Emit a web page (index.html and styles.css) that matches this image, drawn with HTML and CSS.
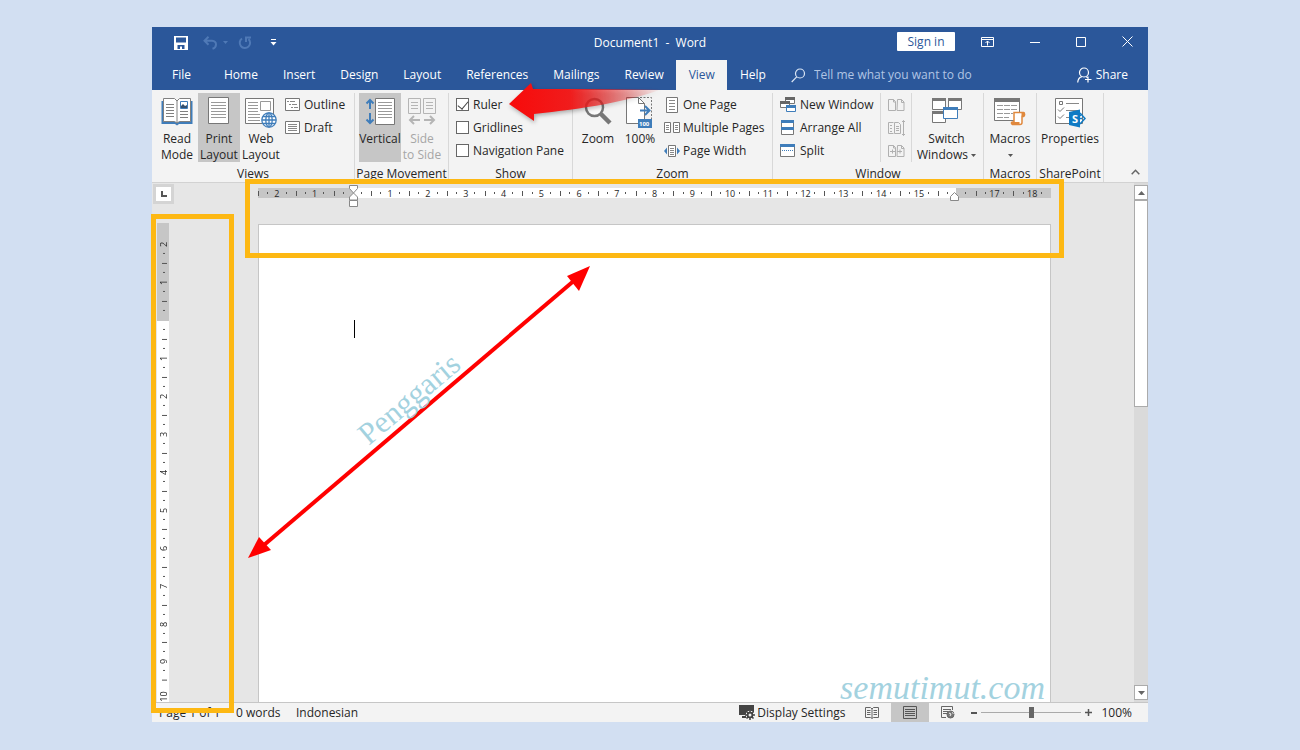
FILE: index.html
```html
<!DOCTYPE html>
<html lang="en">

<head>
  <meta charset="UTF-8" />
  <title>Document1 - Word</title>
  <link rel="stylesheet" href="styles.css">
</head>

<body>
  <div class="window">
    <!-- title bar -->
    <header class="titlebar">
      <div class="quick">
        <button aria-label="Save"><svg width="14" height="14" viewBox="0 0 14 14"><path d="M0 0h14v14H0z" fill="#fff"/><path d="M2 1.500h10v5H2zM3.500 9h7v4H8V10.500H6V13H3.500z" fill="#2b579a"/></svg></button>
        <button class="undo" aria-label="Undo"><svg width="15" height="14" viewBox="0 0 15 14" fill="none" stroke="#4f79b6" stroke-width="2"><path d="M5.500 0.800L1.500 4.800l4 4M2 4.800h7c5.500 0.500 5 6.500 0.500 8"/></svg><svg width="5" height="3" viewBox="0 0 5 3"><path d="M0 0h5L2.500 3z" fill="#4f79b6"/></svg></button>
        <button class="redo" aria-label="Repeat"><svg width="14" height="14" viewBox="0 0 14 14" fill="none" stroke="#4f79b6" stroke-width="2"><path d="M4 2.500A5.200 5.200 0 1 0 10.500 3M8 6V1.500h5"/></svg></button>
        <button aria-label="Customize"><svg width="7" height="7" viewBox="0 0 7 7"><path d="M1 0h5v1H1zM0.500 3h6L3.500 6.500z" fill="#fff"/></svg></button>
      </div>
      <div class="title">Document1&nbsp; -&nbsp; Word</div>
      <div class="controls">
        <button class="signin">Sign in</button>
        <button aria-label="Ribbon options"><svg width="13" height="10" viewBox="0 0 13 10" fill="none" stroke="#fff"><path d="M0.500 0.500h12v9H0.500zM0.500 2.500h12M6.500 8.500V4M4.500 6l2-2 2 2"/></svg></button>
        <button aria-label="Minimize"><svg width="10" height="10" viewBox="0 0 10 10" stroke="#fff"><path d="M0 5.500h10"/></svg></button>
        <button aria-label="Maximize"><svg width="10" height="10" viewBox="0 0 10 10" fill="none" stroke="#fff"><path d="M0.500 0.500h9v9h-9z"/></svg></button>
        <button aria-label="Close"><svg width="11" height="11" viewBox="0 0 11 11" stroke="#fff"><path d="M0.500 0.500l10 10M10.500 0.500l-10 10"/></svg></button>
      </div>
    </header>

    <!-- tabs -->
    <nav class="tabs">
      <a class="file" href="#">File</a>
      <a href="#">Home</a>
      <a href="#">Insert</a>
      <a href="#">Design</a>
      <a href="#">Layout</a>
      <a href="#">References</a>
      <a href="#">Mailings</a>
      <a href="#">Review</a>
      <a class="active" href="#">View</a>
      <a href="#">Help</a>
      <label class="tell">
        <svg width="15" height="15" viewBox="0 0 15 15" fill="none" stroke="#dbe6f5" stroke-width="1.200"><circle cx="9" cy="5.500" r="4.500"/><path d="M5.700 8.800L0.700 14"/></svg>
        <input type="text" placeholder="Tell me what you want to do">
      </label>
      <button class="share"><svg width="15" height="16" viewBox="0 0 15 16" fill="none" stroke="#fff" stroke-width="1.200"><circle cx="7" cy="5.500" r="4.500"/><path d="M0.700 15.500c0.300-3.500 2-5.300 4.300-5.800M9 9.700l1.500 0.800M11 9.500v6M8 12.500h6.500"/></svg>Share</button>
    </nav>

    <!-- ribbon -->
    <section class="ribbon">
      <div class="group views">
        <div class="tools">
          <button class="big"><svg width="32" height="30" viewBox="0 0 32 30"><path d="M0.500 4h31v23H18l-2 1.500L14 27H0.500z" fill="#3f7dba"/><path d="M2.500 1.500h11L16 4l2.500-2.500h11v23h-11L16 26l-2.500-1.500h-11z" fill="#fff" stroke="#808080"/><path d="M16 4v22M5 7.500h8M5 10.500h8M5 13.500h8M5 16.500h8M5 19.500h8M19 14.500h8M19 17.500h8M19 20.500h8" stroke="#808080"/><path d="M19.500 4.500h7v7h-7z" fill="#fff" stroke="#3f7dba"/><path d="M20 11V9l2-2 2 2 2-1v3z" fill="#35506e"/></svg><span>Read<br>Mode</span></button>
          <button class="big on"><svg width="22" height="28" viewBox="0 0 22 28"><path d="M0.500 0.500h20v26h-20z" fill="#fff" stroke="#777"/><path d="M3 5.500h15M3 8.500h15M3 11.500h15M3 14.500h15M3 17.500h15M3 20.500h15" stroke="#999"/></svg><span>Print<br>Layout</span></button>
          <button class="big"><svg width="32" height="32" viewBox="0 0 32 32"><path d="M0.500 1.500h28v25h-28z" fill="#fff" stroke="#777"/><path d="M15.500 4.500h10v9h-10z" fill="#fff" stroke="#999"/><path d="M3 5.500h10M3 8.500h10M3 11.500h10M3 14.500h10M3 17.500h12M3 20.500h12M3 23.500h12" stroke="#999"/><g fill="#fff" stroke="#3f7dba" stroke-width="1.300"><circle cx="24" cy="23" r="7.200"/><ellipse cx="24" cy="23" rx="3.200" ry="7.200"/><path d="M24 16v14M17 23h14M18 19.500h12M18 26.500h12"/></g></svg><span>Web<br>Layout</span></button>
          <div class="small">
            <button><svg width="15" height="13" viewBox="0 0 15 13"><path d="M0.500 0.500h14v12h-14z" fill="#fff" stroke="#777"/><path d="M2 3.500h2M5 3.500h5M4 6.500h2M7 6.500h5M6 9.500h2M9 9.500h4" stroke="#888"/></svg>Outline</button>
            <button><svg width="15" height="13" viewBox="0 0 15 13"><path d="M0.500 0.500h14v12h-14z" fill="#fff" stroke="#777"/><path d="M3 3.500h9M3 5.500h9M3 7.500h9M3 9.500h9" stroke="#888"/></svg>Draft</button>
          </div>
        </div>
        <h2>Views</h2>
      </div>

      <div class="group movement">
        <div class="tools">
          <button class="big on"><svg width="30" height="30" viewBox="0 0 30 30"><path d="M10.500 1.500h19v26h-19z" fill="#fff" stroke="#777"/><path d="M13 5.500h14M13 8.500h14M13 11.500h14M13 14.500h14M13 17.500h14M13 20.500h14" stroke="#999"/><path d="M5 3v9M1.500 6.500L5 3l3.500 3.500M5 16v10M1.500 22.500L5 26l3.500-3.500" fill="none" stroke="#3f7dba" stroke-width="2"/></svg><span>Vertical</span></button>
          <button class="big" disabled><svg width="28" height="28" viewBox="0 0 28 28" fill="none" stroke="#b5b5b5"><path d="M0.500 1.500h12v15h-12zM15.500 1.500h12v15h-12zM3 5.500h7M3 8.500h7M3 11.500h7M18 5.500h7M18 8.500h7M18 11.500h7"/><path d="M12 23H3M6 19l-4 4 4 4M16 23h9M22 19l4 4-4 4" stroke-width="2"/></svg><span>Side<br>to Side</span></button>
        </div>
        <h2>Page Movement</h2>
      </div>

      <div class="group show">
        <div class="tools">
          <div class="checks">
            <label><input type="checkbox" checked>Ruler</label>
            <label><input type="checkbox">Gridlines</label>
            <label><input type="checkbox">Navigation Pane</label>
          </div>
        </div>
        <h2>Show</h2>
      </div>

      <div class="group zoom">
        <div class="tools">
          <button class="big"><svg width="28" height="30" viewBox="0 0 28 30" fill="none" stroke="#777"><circle cx="10.500" cy="10.500" r="8.500" fill="#fafafa" stroke-width="2.500"/><path d="M17 17l9 9" stroke-width="4.500"/></svg><span>Zoom</span></button>
          <button class="big"><svg width="28" height="32" viewBox="0 0 28 32"><path d="M14 0.500h11.500V31" fill="none" stroke="#777" stroke-dasharray="2 1.500"/><path d="M0.500 0.500h12l6 6v20h-18z" fill="#fff" stroke="#777"/><path d="M12.500 0.500v6h6" fill="none" stroke="#777"/><path d="M14 13.500h9M19 9l4.500 4.500L19 18" fill="none" stroke="#3f7dba" stroke-width="2"/><path d="M12 22h14v9H12z" fill="#3f7dba"/><text x="13" y="29" font-size="6" font-weight="bold" fill="#fff">100</text></svg><span>100%</span></button>
          <div class="small">
            <button><svg width="16" height="16" viewBox="0 0 16 16"><path d="M2.500 0.500h11v15h-11z" fill="#fff" stroke="#777"/><path d="M5 3.500h6M5 6.500h6M5 9.500h6M5 12.500h6" stroke="#888"/></svg>One Page</button>
            <button><svg width="16" height="12" viewBox="0 0 16 12"><path d="M0.500 0.500h6v10h-6zM9.500 0.500h6v10h-6z" fill="#fff" stroke="#777"/><path d="M2 3.500h3M2 5.500h3M2 7.500h3M11 3.500h3M11 5.500h3M11 7.500h3" stroke="#888"/></svg>Multiple Pages</button>
            <button><svg width="16" height="12" viewBox="0 0 16 12"><path d="M4.500 0.500h7v11h-7z" fill="#fff" stroke="#777"/><path d="M6 3.500h4M6 5.500h4M6 7.500h4M6 9.500h4" stroke="#888"/><path d="M3 2.500v7L0 6zM13 2.500v7L16 6z" fill="#3f7dba"/></svg>Page Width</button>
          </div>
        </div>
        <h2>Zoom</h2>
      </div>

      <div class="group wins">
        <div class="tools">
          <div class="small">
            <button><svg width="16" height="15" viewBox="0 0 16 15"><path d="M5.500 0.500h9v6h-9zM0.500 4.500h9v6h-9z" fill="#fff" stroke="#777"/><path d="M5 0h10v3H5zM0 4h10v3H0z" fill="#666"/><path d="M6.500 8.500h9v6h-9z" fill="#fff" stroke="#3f7dba"/><path d="M6 8h10v3H6z" fill="#3f7dba"/></svg>New Window</button>
            <button><svg width="16" height="15" viewBox="0 0 16 15"><path d="M1.500 0.500h12v14h-12z" fill="#fff" stroke="#777"/><path d="M1 0h13v3H1zM1 7h13v3H1z" fill="#3f7dba"/></svg>Arrange All</button>
            <button><svg width="16" height="13" viewBox="0 0 16 13"><path d="M0.500 0.500h14v12h-14z" fill="#fff" stroke="#777"/><path d="M0 0h15v3H0z" fill="#3f7dba"/><path d="M2 6.500h11" stroke="#3f7dba" stroke-dasharray="1 1"/></svg>Split</button>
          </div>
          <div class="small pair">
            <button disabled aria-label="View Side by Side"><svg width="17" height="12" viewBox="0 0 17 12" fill="none" stroke="#b0b0b0"><path d="M0.500 0.500h5l2 2v9h-7zM5.500 0.500v2.500h2M9.500 0.500h4l2.500 2.500v8.500H9zM13.500 0.500v3H16"/></svg></button>
            <button disabled aria-label="Synchronous Scrolling"><svg width="17" height="16" viewBox="0 0 17 16" fill="none" stroke="#b0b0b0"><path d="M5.500 2.500H0.500v11h5M6.500 2.500h4l2 2v9h-6zM2 5.500h2M2 8.500h2M2 11.500h2M8 6.500h3M8 8.500h3M8 10.500h3M15.500 0.500v15M14 2l1.500-1.500L17 2M14 14l1.500 1.500L17 14"/></svg></button>
            <button disabled aria-label="Reset Window Position"><svg width="17" height="12" viewBox="0 0 17 12" fill="none" stroke="#b0b0b0"><path d="M0.500 0.500h5l2 2v9h-7zM5.500 0.500v2.500h2M9.500 0.500h4l2.500 2.500v8.500H9zM13.500 0.500v3H16M2 6.500h5M9 6.500h5M4.500 4.500v4M12 4.500v4"/></svg></button>
          </div>
          <button class="big switch"><svg width="30" height="28" viewBox="0 0 30 28"><path d="M0.500 1.500h13v11h-13zM16.500 1.500h13v11h-13zM0.500 14.500h13v11h-13z" fill="#fff" stroke="#777"/><path d="M0 1h14v3H0zM16 1h14v3H16zM0 14h14v3H0z" fill="#777"/><path d="M11.500 10.500h14v11h-14z" fill="#fff" stroke="#3f7dba"/><path d="M11 10h15v3H11z" fill="#3f7dba"/></svg><span>Switch<br>Windows <svg width="5" height="3" viewBox="0 0 5 3"><path d="M0 0h5L2.500 3z" fill="#555"/></svg></span></button>
        </div>
        <h2>Window</h2>
      </div>

      <div class="group macros">
        <div class="tools">
          <button class="big"><svg width="32" height="30" viewBox="0 0 32 30"><path d="M0.500 1.500h25v22h-25z" fill="#fff" stroke="#777"/><path d="M0 1h26v4H0z" fill="#777"/><path d="M3 8.500h20M3 12.500h20M3 16.500h16M3 20.500h12" stroke="#999" stroke-dasharray="6 1"/><path d="M20 15.500h9.500c1.500 0.500 1.500 3.500 0 4H28v6c0 1.500-1 2-2 2h-7.500c-1.500-0.500-1.500-2.500 0-2.500H20z" fill="#fff" stroke="#e0883d" stroke-width="1.500"/><path d="M17.500 25h8v3h-7zM27.500 15h3v4h-3z" fill="#e0883d"/></svg><span>Macros<br><svg width="5" height="3" viewBox="0 0 5 3"><path d="M0 0h5L2.500 3z" fill="#555"/></svg></span></button>
        </div>
        <h2>Macros</h2>
      </div>

      <div class="group share-point">
        <div class="tools">
          <button class="big"><svg width="32" height="31" viewBox="0 0 32 31"><path d="M1.500 1.500h27v25h-27z" fill="#fff" stroke="#777"/><path d="M12 6.500h13M12 13.500h13M12 20.500h4" stroke="#888"/><path d="M5.500 4.500h3v3h-3zM4 12.500l2 2 4-4M4 19.500l2 2 4-4" fill="none" stroke="#777"/><path d="M15 15l11-2.500v18L15 28z" fill="#0f7ac4"/><path d="M26 16l5 5.500-5 5.500M27 18.500h-1M28 21.500h-2" fill="none" stroke="#0f7ac4" stroke-width="1.500"/><text x="18" y="26" font-size="11" font-weight="bold" fill="#fff">S</text></svg><span>Properties</span></button>
        </div>
        <h2>SharePoint</h2>
      </div>
      <button class="collapse" aria-label="Collapse the ribbon"><svg width="9" height="6" viewBox="0 0 9 6"><path d="M0.700 5.300l3.800-4 3.800 4" fill="none" stroke="#666" stroke-width="1.500"/></svg></button>
    </section>

    <!-- document area -->
    <main class="work">
      <div class="side">
        <button class="tabstop" aria-label="Left tab"><svg width="6" height="6" viewBox="0 0 6 6"><path d="M1 0v5h5" fill="none" stroke="#555" stroke-width="2"/></svg></button>
        <ol class="vruler">
          <li class="first">2</li><li>1</li><li></li><li>1</li><li>2</li><li>3</li><li>4</li><li>5</li><li>6</li><li>7</li><li>8</li><li>9</li><li class="last">10</li>
        </ol>
      </div>
      <div class="center">
        <div class="hruler">
          <ol>
            <li>2</li><li>1</li><li></li><li>1</li><li>2</li><li>3</li><li>4</li><li>5</li><li>6</li><li>7</li><li>8</li><li>9</li><li>10</li><li>11</li><li>12</li><li>13</li><li>14</li><li>15</li><li></li><li>17</li><li>18</li>
          </ol>
          <svg class="indent left" width="9" height="22" viewBox="0 0 9 22" fill="#fff" stroke="#888"><path d="M0.500 0.500h8v3l-4 4.500-4-4.500zM4.500 8l4 4v3h-8v-3zM0.500 15.500h8v6h-8z"/></svg>
          <svg class="indent right" width="9" height="9" viewBox="0 0 9 9" fill="#fff" stroke="#888"><path d="M4.500 0.500l4 4v4h-8v-4z"/></svg>
        </div>
        <article class="sheet">
          <span class="caret"></span>
          <p class="brand">semutimut.com</p>
        </article>
      </div>
      <div class="scroll">
        <button aria-label="Scroll up"><svg width="7" height="4" viewBox="0 0 7 4"><path d="M0 4h7L3.500 0z" fill="#666"/></svg></button>
        <div class="thumb"></div>
        <button class="down" aria-label="Scroll down"><svg width="7" height="4" viewBox="0 0 7 4"><path d="M0 0h7L3.500 4z" fill="#666"/></svg></button>
      </div>
    </main>

    <!-- status bar -->
    <footer class="status">
      <span class="pages">Page 1 of 1</span>
      <span class="words">0 words</span>
      <span>Indonesian</span>
      <button class="display"><svg width="16" height="15" viewBox="0 0 16 15"><path d="M0 0h15v10H0zM3 11h5v2H3z" fill="#444"/><circle cx="11" cy="10" r="4" fill="#444" stroke="#f3f3f3"/><path d="M11 5v10M6 10h10M7.500 6.500l7 7M14.500 6.500l-7 7" stroke="#444" stroke-width="1.500"/><circle cx="11" cy="10" r="1.500" fill="#f3f3f3"/></svg>Display Settings</button>
      <button class="mode" aria-label="Read Mode"><svg width="14" height="13" viewBox="0 0 14 13" fill="none" stroke="#666"><path d="M0.500 1.500h5L7 3l1.500-1.500h5v10h-5L7 12.500 5.500 11.500h-5zM7 3v9M2 4.500h3.500M2 6.500h3.500M2 8.500h3.500M8.500 4.500H12M8.500 6.500H12M8.500 8.500H12"/></svg></button>
      <button class="mode on" aria-label="Print Layout"><svg width="14" height="13" viewBox="0 0 14 13" fill="none" stroke="#555"><path d="M0.500 0.500h13v12h-13zM2 3.500h10M2 5.500h10M2 7.500h10M2 9.500h10"/></svg></button>
      <button class="mode" aria-label="Web Layout"><svg width="14" height="13" viewBox="0 0 14 13" fill="none" stroke="#666"><path d="M5 11.500H0.500v-11h11V4M2 3.500h8M2 5.500h5M2 7.500h4"/><circle cx="9.500" cy="8.500" r="3.500" fill="#777"/><path d="M8 7l2 1-1 2M11 6.500l1.500 1" stroke="#f3f3f3"/></svg></button>
      <div class="zoombar">
        <button aria-label="Zoom out"><svg width="6" height="6" viewBox="0 0 6 6"><path d="M0 2h6v2H0z" fill="#555"/></svg></button>
        <input type="range" min="0" max="100" value="50" aria-label="Zoom level">
        <button aria-label="Zoom in"><svg width="7" height="7" viewBox="0 0 7 7"><path d="M0 3.500h7M3.500 0v7" stroke="#555" stroke-width="1.500"/></svg></button>
        <span>100%</span>
      </div>
    </footer>

    <!-- highlights and arrows over the window -->
    <div class="mark mark-top"></div>
    <div class="mark mark-left"></div>
    <svg class="arrows">
      <defs>
        <linearGradient id="fade" gradientUnits="userSpaceOnUse" x1="357" y1="0" x2="510" y2="0">
          <stop offset="0" stop-color="#f80a0a"/>
          <stop offset="0.400" stop-color="#f01c1c"/>
          <stop offset="1" stop-color="#f01c1c" stop-opacity="0"/>
        </linearGradient>
      </defs>
      <path class="pointer" d="M357 77L379 56L381 62L510 62C480 74 430 82 382 87L382 94Z" fill="url(#fade)"/>
      <g fill="#f00">
        <path d="M112 518L424 252" stroke="#f00" stroke-width="4"/>
        <path d="M96 531L107 510L119 523Z"/>
        <path d="M438 239L415 249L427 264Z"/>
      </g>
    </svg>
    <p class="caption">Penggaris</p>
  </div>
</body>

</html>
```

FILE: styles.css
```css
* {
  box-sizing: border-box;
}

body {
  margin: 0;
  padding: 27px 152px 28px;
  min-height: 100vh;
  display: flex;
  background-color: #d2dff2;
  font-family: "Open Sans", "Noto Sans", sans-serif;
  font-size: 12px;
  line-height: 16px;
  color: #262626;
}

button, input {
  margin: 0;
  padding: 0;
  border: none;
  background: none;
  font: inherit;
  color: inherit;
}

a {
  color: inherit;
  text-decoration: none;
}

svg {
  flex: none;
}

ol {
  margin: 0;
  padding: 0;
  list-style: none;
}

.window {
  position: relative;
  flex: 1;
  display: flex;
  flex-direction: column;
  background-color: #e6e6e6;
}

/* title bar */
.titlebar {
  display: grid;
  grid-template-columns: 1fr auto 1fr;
  align-items: center;
  height: 33px;
  padding-bottom: 2px;
  background-color: #2b579a;
  color: #fff;
}

.titlebar button {
  display: flex;
  align-items: center;
}

.quick {
  display: flex;
  align-items: center;
  padding-left: 22px;
}

.quick .undo {
  gap: 5px;
  margin-left: 15px;
}

.quick .redo {
  margin: 0 18px 0 10px;
}

.controls {
  display: flex;
  justify-content: flex-end;
  align-items: center;
  gap: 36px;
  padding: 0 15px 2px 0;
}

.controls .signin {
  justify-content: center;
  width: 58px;
  height: 19px;
  margin-right: -10px;
  background-color: #fff;
  color: #2b579a;
  border-radius: 1px;
}

/* tabs */
.tabs {
  display: flex;
  height: 30px;
  padding-left: 7px;
  background-color: #2b579a;
  color: #fff;
  line-height: 30px;
}

.tabs a {
  padding: 0 12px 0 13px;
}

.tabs .file {
  padding-right: 20px;
}

.tabs .active {
  background-color: #f3f3f3;
  color: #2b579a;
}

.tell {
  display: flex;
  align-items: center;
  gap: 8px;
  flex: 1;
  padding-left: 13px;
}

.tell input {
  flex: 1;
}

.tell input::placeholder {
  color: #b1c5e4;
  opacity: 1;
}

.share {
  display: flex;
  align-items: center;
  gap: 4px;
  padding-right: 20px;
}

/* ribbon */
.ribbon {
  display: flex;
  height: 93px;
  background-color: #f3f3f3;
  border-bottom: 1px solid #d2d2d2;
}

.group {
  display: flex;
  flex-direction: column;
  margin-top: 3px;
  padding: 0 4px;
  border-right: 1px solid #d8d8d8;
}

.group h2 {
  margin: auto 0 0;
  font-size: 12px;
  line-height: 16px;
  font-weight: normal;
  text-align: center;
  white-space: nowrap;
}

.tools {
  display: flex;
  height: 69px;
}

.big {
  display: flex;
  flex-direction: column;
  align-items: center;
  width: 42px;
  padding-top: 4px;
  white-space: nowrap;
}

.big > svg {
  margin-bottom: auto;
}

.big span {
  display: block;
  height: 31px;
  text-align: center;
}

.big span svg {
  vertical-align: middle;
}

.on {
  background-color: #c6c6c6;
}

button:disabled {
  color: #a6a6a6;
}

.small button, .checks label {
  display: flex;
  align-items: center;
  height: 23px;
  gap: 4px;
  white-space: nowrap;
}

.small {
  padding-left: 3px;
}

.views { width: 203px; }
.movement { width: 94px; }
.show { width: 124px; }
.zoom { width: 200px; }
.wins { width: 211px; }
.macros { width: 53px; }
.share-point { width: 67px; }

.movement h2, .share-point h2 {
  margin-left: -4px;
  margin-right: -4px;
}

.checks {
  padding-left: 3px;
}

.checks input {
  appearance: none;
  display: flex;
  justify-content: center;
  width: 13px;
  height: 13px;
  border: 1px solid #666;
  background-color: #fff;
}

.checks input:checked::after {
  content: "";
  width: 5px;
  height: 9px;
  border: solid #444;
  border-width: 0 1px 1px 0;
  transform: rotate(40deg);
}

.zoom .small button {
  gap: 3px;
}

.pair {
  width: 32px;
  margin-left: auto;
  padding-left: 7px;
  border: solid #d8d8d8;
  border-width: 0 1px;
}

.switch {
  width: 67px;
  padding-left: 2px;
}

.macros .big {
  width: 44px;
}

.share-point .big {
  width: 58px;
}

.collapse {
  margin: auto 8px 3px auto;
}

/* document area */
.work {
  flex: 1;
  display: flex;
  min-height: 0;
}

.side {
  display: flex;
  flex-direction: column;
  width: 23px;
}

.tabstop {
  display: flex;
  align-items: center;
  justify-content: center;
  width: 21px;
  height: 20px;
  margin: 1px 0 19px 1px;
  border: 3px solid #d4d4d4;
  background-color: #fff;
}

/* one cell per centimetre, label in the middle, dots at the quarters */
.hruler ol {
  display: flex;
  height: 10px;
  background: linear-gradient(90deg, #c6c6c6 12%, #fff 12%, #fff 88%, #c6c6c6 88%);
}

.hruler li, .vruler li {
  flex: 1;
  font-size: 9px;
  line-height: 11px;
  text-align: center;
  background-image: linear-gradient(#555, #555), linear-gradient(#555, #555), linear-gradient(#555, #555);
  background-repeat: no-repeat;
}

.hruler li {
  background-size: 1px 5px, 1px 2px, 1px 2px;
  background-position: 0 50%, 25% 50%, 75% 50%;
}

.hruler {
  position: relative;
  padding-top: 5px;
}

.indent {
  position: absolute;
}

.indent.left {
  left: 12%;
  top: 2px;
  margin-left: -4px;
}

.indent.right {
  left: 88%;
  top: 9px;
  margin-left: -6px;
}

.vruler {
  flex: 1;
  display: flex;
  flex-direction: column;
  width: 12px;
  margin-left: 5px;
  padding-top: 2px;
  background: linear-gradient(#c6c6c6 98px, #fff 98px);
}

.vruler li {
  writing-mode: vertical-rl;
  transform: rotate(180deg);
  min-height: 0;
  line-height: 13px;
  background-size: 5px 1px, 2px 1px, 2px 1px;
  background-position: 30% 100%, 40% 25%, 40% 75%;
}

.vruler .first {
  background-size: 0 0, 2px 1px, 0 0;
}

.vruler .last {
  flex-grow: 0.57;
  text-align: start;
  background-size: 5px 1px, 0 0, 0 0;
}

.center {
  flex: 1;
  display: flex;
  flex-direction: column;
  padding: 0 83px;
}

.sheet {
  flex: 1;
  display: flex;
  flex-direction: column;
  justify-content: space-between;
  margin-top: 26px;
  padding: 95px 5px 0 95px;
  background-color: #fff;
  border: 1px solid #c6c6c6;
  border-bottom: none;
}

.caret {
  width: 1px;
  height: 18px;
  background-color: #000;
}

.brand {
  margin: 0;
  text-align: right;
  font-family: "Liberation Serif", serif;
  font-style: italic;
  font-size: 34px;
  line-height: 28px;
  color: #a3d2df;
}

.scroll {
  display: flex;
  flex-direction: column;
  width: 14px;
  padding: 2px 0;
  background-color: #dadada;
}

.scroll button, .thumb {
  display: flex;
  align-items: center;
  justify-content: center;
  height: 15px;
  background-color: #fff;
  border: 1px solid #ababab;
}

.thumb {
  height: 207px;
}

.scroll .down {
  margin-top: auto;
}

/* status bar */
.status {
  display: flex;
  align-items: center;
  height: 20px;
  padding-left: 7px;
  background-color: #f3f3f3;
  border-top: 1px solid #c6c6c6;
}

.status .pages {
  width: 77px;
}

.status .words {
  width: 60px;
}

.display {
  display: flex;
  align-items: center;
  gap: 2px;
  margin-left: auto;
}

.mode {
  display: flex;
  align-items: center;
  justify-content: center;
  align-self: stretch;
  width: 38px;
}

.display + .mode {
  margin-left: 8px;
}

.zoombar {
  display: flex;
  align-items: center;
  gap: 4px;
  margin-left: 4px;
  padding-right: 16px;
}

.zoombar button {
  display: flex;
}

.zoombar span {
  padding-left: 5px;
}

.zoombar input {
  appearance: none;
  width: 100px;
  height: 12px;
  background: linear-gradient(#aaa, #aaa) center / 100% 1px no-repeat;
}

.zoombar input::-webkit-slider-thumb {
  appearance: none;
  width: 5px;
  height: 11px;
  background-color: #666;
}

/* highlights and arrows */
.mark {
  position: absolute;
  border: 5px solid #fdb813;
}

.mark-top {
  left: 93px;
  right: 84px;
  top: 152px;
  height: 79px;
}

.mark-left {
  left: -1px;
  top: 187px;
  bottom: 9px;
  width: 83px;
}

.arrows {
  position: absolute;
  left: 0;
  top: 0;
  width: 100%;
  height: 100%;
  pointer-events: none;
}

.pointer {
  filter: drop-shadow(1px 2px 2px rgba(0, 0, 0, 0.3));
}

.caption {
  position: absolute;
  left: 196px;
  top: 354px;
  margin: 0;
  font-family: "Liberation Serif", serif;
  font-size: 31px;
  line-height: 36px;
  color: #a3d2df;
  transform: rotate(-40deg);
}
```
